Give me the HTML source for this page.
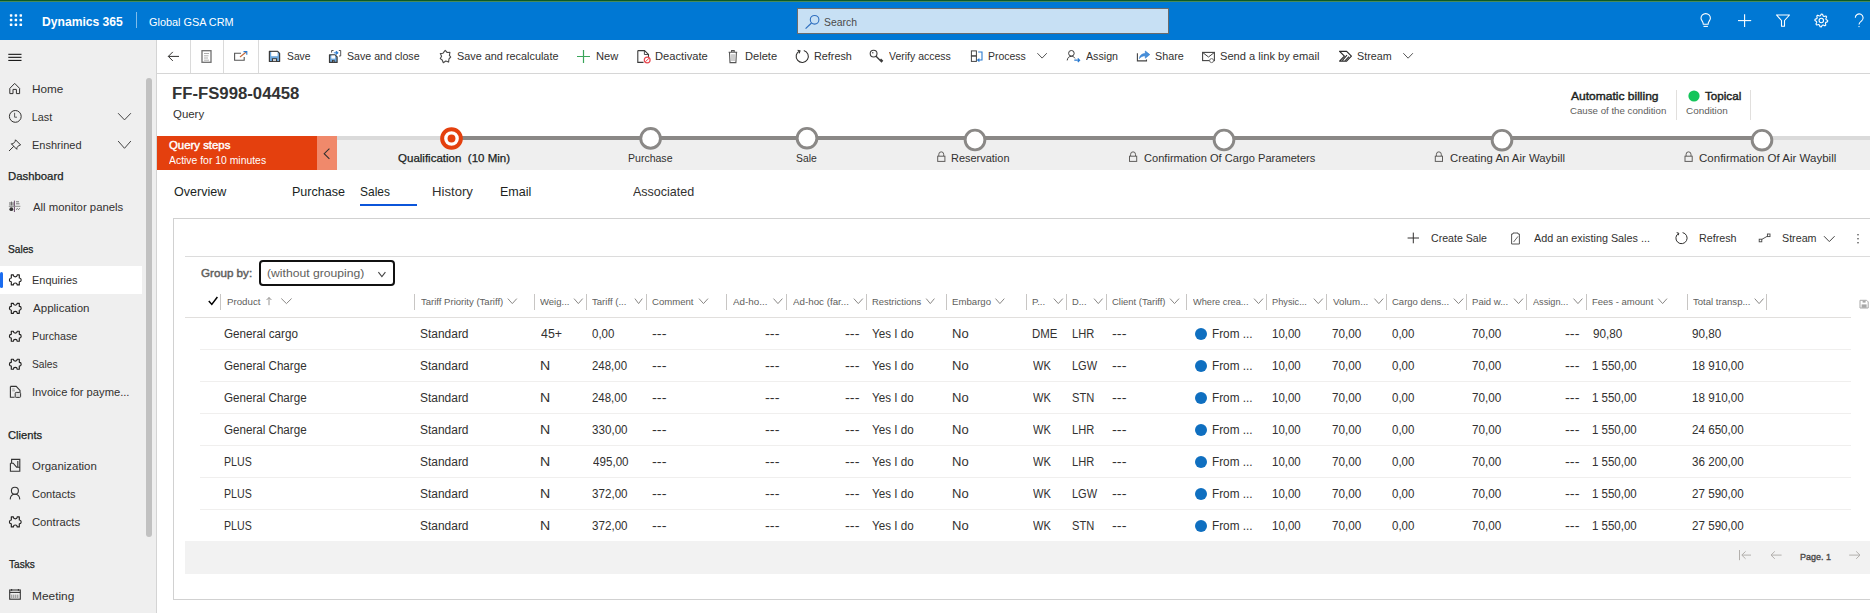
<!DOCTYPE html>
<html><head><meta charset="utf-8">
<style>
*{box-sizing:border-box;margin:0;padding:0}
html,body{width:1870px;height:613px;overflow:hidden;background:#fff;font-family:"Liberation Sans",sans-serif;color:#323130;position:relative}
.a{position:absolute;white-space:pre;transform-origin:0 0}
svg.a{overflow:visible}
</style></head>
<body>
<div class="a" style="left:0px;top:0px;width:1870px;height:40px;background:#0078d4;"></div>
<div class="a" style="left:0px;top:0px;width:1870px;height:1px;background:#0b5a2a;"></div>
<div class="a" style="left:0px;top:1px;width:1870px;height:1px;background:#468a5c;"></div>
<div class="a" style="left:0px;top:40px;width:156px;height:573px;background:#efefef;"></div>
<div class="a" style="left:156px;top:40px;width:1px;height:573px;background:#d4d4d4;"></div>
<div class="a" style="left:146px;top:78px;width:6px;height:459px;background:#c1c1c1;border-radius:3px"></div>
<div class="a" style="left:0px;top:266px;width:142px;height:28px;background:#ffffff;"></div>
<div class="a" style="left:0px;top:272px;width:3px;height:16px;background:#1a6cf0;border-radius:1.5px"></div>
<div class="a" style="left:157px;top:73px;width:1713px;height:1px;background:#d6d6d6;"></div>
<div class="a" style="left:190px;top:40px;width:1px;height:33px;background:#dadada;"></div>
<div class="a" style="left:223px;top:40px;width:1px;height:33px;background:#dadada;"></div>
<div class="a" style="left:258px;top:40px;width:1px;height:33px;background:#dadada;"></div>
<div class="a" style="left:797px;top:8px;width:372px;height:26px;background:#c7e0f4;border:1px solid #6b6b6b"></div>
<div class="a" style="left:136px;top:12px;width:1px;height:16px;background:rgba(255,255,255,0.5);"></div>
<div class="a" style="left:157px;top:136px;width:160px;height:34px;background:#e4400e;"></div>
<div class="a" style="left:317px;top:136px;width:20px;height:34px;background:#f0896b;"></div>
<div class="a" style="left:337px;top:140px;width:1533px;height:30px;background:#efefef;"></div>
<div class="a" style="left:337px;top:136px;width:1533px;height:4px;background:#dadada;"></div>
<div class="a" style="left:451px;top:136px;width:1311px;height:4px;background:#8a8886;"></div>
<div class="a" style="left:360px;top:204px;width:57px;height:2px;background:#0b55da;"></div>
<div class="a" style="left:173px;top:218px;width:1697px;height:1px;background:#d1d1d1;"></div>
<div class="a" style="left:173px;top:218px;width:1px;height:382px;background:#d1d1d1;"></div>
<div class="a" style="left:173px;top:599px;width:1697px;height:1px;background:#d1d1d1;"></div>
<div class="a" style="left:185px;top:256px;width:1685px;height:1px;background:#dcdcdc;"></div>
<div class="a" style="left:185px;top:317px;width:1666px;height:1px;background:#e1dfdd;"></div>
<div class="a" style="left:200px;top:349px;width:1651px;height:1px;background:#f0efee;"></div>
<div class="a" style="left:200px;top:381px;width:1651px;height:1px;background:#f0efee;"></div>
<div class="a" style="left:200px;top:413px;width:1651px;height:1px;background:#f0efee;"></div>
<div class="a" style="left:200px;top:445px;width:1651px;height:1px;background:#f0efee;"></div>
<div class="a" style="left:200px;top:477px;width:1651px;height:1px;background:#f0efee;"></div>
<div class="a" style="left:200px;top:509px;width:1651px;height:1px;background:#f0efee;"></div>
<div class="a" style="left:185px;top:541px;width:1685px;height:33px;background:#f2f2f2;"></div>
<div class="a" style="left:220px;top:294px;width:1px;height:16px;background:#c8c6c4;"></div>
<div class="a" style="left:414px;top:294px;width:1px;height:16px;background:#c8c6c4;"></div>
<div class="a" style="left:534px;top:294px;width:1px;height:16px;background:#c8c6c4;"></div>
<div class="a" style="left:586px;top:294px;width:1px;height:16px;background:#c8c6c4;"></div>
<div class="a" style="left:646px;top:294px;width:1px;height:16px;background:#c8c6c4;"></div>
<div class="a" style="left:726px;top:294px;width:1px;height:16px;background:#c8c6c4;"></div>
<div class="a" style="left:786px;top:294px;width:1px;height:16px;background:#c8c6c4;"></div>
<div class="a" style="left:866px;top:294px;width:1px;height:16px;background:#c8c6c4;"></div>
<div class="a" style="left:946px;top:294px;width:1px;height:16px;background:#c8c6c4;"></div>
<div class="a" style="left:1026px;top:294px;width:1px;height:16px;background:#c8c6c4;"></div>
<div class="a" style="left:1066px;top:294px;width:1px;height:16px;background:#c8c6c4;"></div>
<div class="a" style="left:1106px;top:294px;width:1px;height:16px;background:#c8c6c4;"></div>
<div class="a" style="left:1186px;top:294px;width:1px;height:16px;background:#c8c6c4;"></div>
<div class="a" style="left:1266px;top:294px;width:1px;height:16px;background:#c8c6c4;"></div>
<div class="a" style="left:1326px;top:294px;width:1px;height:16px;background:#c8c6c4;"></div>
<div class="a" style="left:1386px;top:294px;width:1px;height:16px;background:#c8c6c4;"></div>
<div class="a" style="left:1466px;top:294px;width:1px;height:16px;background:#c8c6c4;"></div>
<div class="a" style="left:1526px;top:294px;width:1px;height:16px;background:#c8c6c4;"></div>
<div class="a" style="left:1586px;top:294px;width:1px;height:16px;background:#c8c6c4;"></div>
<div class="a" style="left:1687px;top:294px;width:1px;height:16px;background:#c8c6c4;"></div>
<div class="a" style="left:1766px;top:294px;width:1px;height:16px;background:#c8c6c4;"></div>
<div class="a" style="left:259px;top:260px;width:136px;height:26px;background:#fff;border:2px solid #111;border-radius:4px"></div>
<div class="a" style="left:1676px;top:90px;width:1px;height:30px;background:#e1dfdd;"></div>
<div class="a" style="left:1750px;top:90px;width:1px;height:30px;background:#e1dfdd;"></div>
<div class="a" style="left:1195px;top:327.8px;width:12px;height:12px;background:#0f6fc0;border-radius:50%"></div>
<div class="a" style="left:1195px;top:359.8px;width:12px;height:12px;background:#0f6fc0;border-radius:50%"></div>
<div class="a" style="left:1195px;top:391.8px;width:12px;height:12px;background:#0f6fc0;border-radius:50%"></div>
<div class="a" style="left:1195px;top:423.8px;width:12px;height:12px;background:#0f6fc0;border-radius:50%"></div>
<div class="a" style="left:1195px;top:455.8px;width:12px;height:12px;background:#0f6fc0;border-radius:50%"></div>
<div class="a" style="left:1195px;top:487.8px;width:12px;height:12px;background:#0f6fc0;border-radius:50%"></div>
<div class="a" style="left:1195px;top:519.8px;width:12px;height:12px;background:#0f6fc0;border-radius:50%"></div>
<svg class="a" style="left:0;top:0" width="1870" height="613" viewBox="0 0 1870 613"><rect x="9.85" y="14.15" width="2.5" height="2.5" rx="0.6" fill="#fff"/><rect x="9.85" y="18.85" width="2.5" height="2.5" rx="0.6" fill="#fff"/><rect x="9.85" y="23.55" width="2.5" height="2.5" rx="0.6" fill="#fff"/><rect x="14.65" y="14.15" width="2.5" height="2.5" rx="0.6" fill="#fff"/><rect x="14.65" y="18.85" width="2.5" height="2.5" rx="0.6" fill="#fff"/><rect x="14.65" y="23.55" width="2.5" height="2.5" rx="0.6" fill="#fff"/><rect x="19.55" y="14.15" width="2.5" height="2.5" rx="0.6" fill="#fff"/><rect x="19.55" y="18.85" width="2.5" height="2.5" rx="0.6" fill="#fff"/><rect x="19.55" y="23.55" width="2.5" height="2.5" rx="0.6" fill="#fff"/><circle cx="814.6" cy="19.8" r="4.3" fill="none" stroke="#2f6fbf" stroke-width="1.1"/><line x1="811.5" y1="23" x2="805.6" y2="28.6" stroke="#2f6fbf" stroke-width="1.2"/><path d="M1703.3 24.2 C1703.3 21.5 1701 20.5 1701 18.3 A4.7 4.7 0 0 1 1710.4 18.3 C1710.4 20.5 1708.1 21.5 1708.1 24.2 Z" fill="none" stroke="#fff" stroke-width="1.1"/><line x1="1703.5" y1="26.4" x2="1707.9" y2="26.4" stroke="#fff" stroke-width="1.1"/><line x1="1738" y1="20.6" x2="1751.2" y2="20.6" stroke="#fff" stroke-width="1.1"/><line x1="1744.6" y1="14.2" x2="1744.6" y2="26.9" stroke="#fff" stroke-width="1.1"/><path d="M1776.5 15 L1789.5 15 L1784.5 20.5 L1784.5 26.2 L1781.5 26.2 L1781.5 20.5 Z" fill="none" stroke="#fff" stroke-width="1.1" stroke-linejoin="round"/><path d="M1821.30 14.10 L1822.55 14.22 L1823.18 15.97 L1824.02 16.43 L1825.83 15.97 L1826.62 16.94 L1825.83 18.62 L1826.11 19.54 L1827.70 20.50 L1827.58 21.75 L1825.83 22.38 L1825.37 23.22 L1825.83 25.03 L1824.86 25.82 L1823.18 25.03 L1822.26 25.31 L1821.30 26.90 L1820.05 26.78 L1819.42 25.03 L1818.58 24.57 L1816.77 25.03 L1815.98 24.06 L1816.77 22.38 L1816.49 21.46 L1814.90 20.50 L1815.02 19.25 L1816.77 18.62 L1817.23 17.78 L1816.77 15.97 L1817.74 15.18 L1819.42 15.97 L1820.34 15.69 Z" fill="none" stroke="#fff" stroke-width="1.1" stroke-linejoin="round"/><circle cx="1821.3" cy="20.5" r="2.2" fill="none" stroke="#fff" stroke-width="1.1"/><path d="M1855.3 17.8 A3.9 3.9 0 1 1 1861.7 20.8 C1859.8 22.2 1859 22.6 1859 24.6" fill="none" stroke="#fff" stroke-width="1.1"/><circle cx="1859" cy="26.6" r="0.7" fill="#fff"/><path d="M168.3 56.4 H179 M172.8 51.9 L168.3 56.4 L172.8 60.9" fill="none" stroke="#323130" stroke-width="1"/><rect x="202" y="50.7" width="9" height="11.6" fill="#fff" stroke="#707070" stroke-width="1.3"/><path d="M204 53.5 H209 M204 55.8 H208.5 M204 58 H208 M204 60.2 H209" stroke="#9a9a9a" stroke-width="0.8"/><path d="M241 53.2 H234.6 V60.3 H244.2 V57" fill="none" stroke="#555" stroke-width="1.1"/><path d="M240 57 L246.5 51.8" stroke="#c86b3a" stroke-width="1.1"/><path d="M243.5 51.6 H246.8 V54.8" fill="none" stroke="#2a7ad0" stroke-width="1.1"/><path d="M269.4 51.3 H277.59999999999997 L279.59999999999997 53.3 V61.5 H269.4 Z" fill="#6fa8dc" stroke="#3b3b3b" stroke-width="1.2" stroke-linejoin="round"/><rect x="271.2" y="51.9" width="6.3999999999999995" height="4.284" fill="#fff"/><rect x="271.9" y="58.236" width="5.199999999999999" height="3.264" fill="#3b3b3b"/><rect x="273.0" y="59.052" width="2.999999999999999" height="2.04" fill="#cfcfcf"/><path d="M329.5 54.8 H335.1 L337.1 56.8 V62.4 H329.5 Z" fill="#6fa8dc" stroke="#3b3b3b" stroke-width="1.2" stroke-linejoin="round"/><rect x="331.3" y="55.4" width="3.8" height="3.1919999999999997" fill="#fff"/><rect x="332.0" y="59.967999999999996" width="2.5999999999999996" height="2.432" fill="#3b3b3b"/><rect x="333.1" y="60.57599999999999" width="0.39999999999999947" height="1.52" fill="#cfcfcf"/><path d="M331.6 52.6 V50.5 H333.5 M338.8 50.5 H340.7 V56 H339" fill="none" stroke="#444" stroke-width="0.9"/><path d="M333.8 52.8 H337.5 M336.2 51.2 L338.2 52.8 L336.2 54.4 Z" stroke="#2a7ad0" fill="#2a7ad0" stroke-width="0.9"/><path d="M445.2 50.4 L447.2 52.5 L449.9 52.3 L449.4 55.3 L450.7 57 L449 58.8 L448.6 62.1 L445.8 61 L443.3 62.7 L442.2 60 L440.3 58.6 L441.6 56.3 L440.3 53.6 L443 53.2 Z" fill="none" stroke="#4a4a4a" stroke-width="1.1" stroke-linejoin="round"/><path d="M577 56.5 H590 M583.5 50.1 V62.9" stroke="#3aa55a" stroke-width="1.2"/><path d="M637.8 50.6 H644.5 L648.5 54.4 V57.4 M637.8 50.6 V62.4 H643.5" fill="none" stroke="#3b3b3b" stroke-width="1.1"/><path d="M644.4 50.8 V54.5 H648.3" fill="none" stroke="#3b3b3b" stroke-width="0.9"/><circle cx="647.2" cy="60" r="2.9" fill="#fff" stroke="#e8474f" stroke-width="1.2"/><line x1="645.3" y1="61.8" x2="649.1" y2="58.2" stroke="#e8474f" stroke-width="1"/><path d="M728.6 52.3 H737.2 M731.6 52.2 V50.6 H734.2 V52.2 M729.5 52.5 L730 62.6 H735.9 L736.4 52.5" fill="none" stroke="#555" stroke-width="1.1"/><path d="M731.8 54.2 V61 M733 54.2 V61 M734.2 54.2 V61" stroke="#999" stroke-width="0.7"/><path d="M799.6 50.9 A6.1 6.1 0 1 0 803.8 50.5" fill="none" stroke="#323130" stroke-width="1.1"/><path d="M797.6 50.3 L800 50.9 L799.2 53.3" fill="none" stroke="#323130" stroke-width="1.1"/><circle cx="873.6" cy="53.6" r="3.4" fill="none" stroke="#3b3b3b" stroke-width="1.1"/><circle cx="872.8" cy="52.8" r="0.7" fill="#3b3b3b"/><path d="M875.8 56 L881.5 61.8 L882.4 60.8 L880.6 59" fill="none" stroke="#3b3b3b" stroke-width="1.3"/><rect x="971.4" y="50.9" width="5" height="5" fill="none" stroke="#444" stroke-width="1"/><rect x="971.4" y="56" width="5" height="5.4" fill="none" stroke="#444" stroke-width="1"/><path d="M978.2 52 H982 V60 H977.8 M979.4 58.6 L977.6 60 L979.4 61.5" fill="none" stroke="#2a7ad0" stroke-width="1.1"/><path d="M1037.4 53.2 L1042.1 58.1 L1046.8 53.2" fill="none" stroke="#555" stroke-width="1"/><path d="M1403.3 53.2 L1408.1 58.2 L1412.9 53.2" fill="none" stroke="#555" stroke-width="1"/><circle cx="1071.4" cy="53.3" r="2.8" fill="none" stroke="#3b3b3b" stroke-width="1"/><path d="M1067.2 60.4 C1067.6 57.6 1069 56.3 1071.4 56.3 C1073.3 56.3 1074.4 57.3 1075 58.3" fill="none" stroke="#3b3b3b" stroke-width="1"/><path d="M1074.3 60.2 H1079.4 M1077.8 58.4 L1079.6 60.2 L1077.8 62" fill="none" stroke="#2a7ad0" stroke-width="1.2"/><path d="M1137.4 53.3 V60.9 H1146.5 V59.6" fill="none" stroke="#444" stroke-width="1.1"/><path d="M1139.4 58.6 C1139.8 55.2 1142 53.6 1145.3 53.6 V51 L1149.8 54.6 L1145.3 58.2 V55.8 C1142.8 55.8 1140.8 56.6 1139.4 58.6 Z" fill="#4a90d9" stroke="#2a7ad0" stroke-width="0.6"/><rect x="1202.6" y="52.4" width="11.8" height="8.2" fill="none" stroke="#444" stroke-width="1.1"/><path d="M1202.8 52.6 L1208.5 57 L1214.2 52.6" fill="none" stroke="#444" stroke-width="1"/><circle cx="1211.6" cy="60.6" r="2" fill="#fff" stroke="#666" stroke-width="0.9"/><path d="M1339.6 51.3 H1346.6 L1351.4 56.2 L1346.6 61.1 H1339.6 L1344.4 56.2 Z" fill="none" stroke="#2b2b2b" stroke-width="1.2" stroke-linejoin="round"/><path d="M1342.2 60.6 L1347 55.2 M1345.2 60.6 L1349 56.6" stroke="#2b2b2b" stroke-width="1.1"/><circle cx="1694" cy="96" r="5.6" fill="#13c55a"/><path d="M329.4 148.6 L324.2 153.7 L329.4 158.8" fill="none" stroke="#323130" stroke-width="1.1"/><circle cx="451.5" cy="138.5" r="9.35" fill="#fff" stroke="#e4400e" stroke-width="4"/><circle cx="451.5" cy="138.5" r="3.95" fill="#e4400e"/><circle cx="650.6" cy="138.4" r="9.85" fill="#fff" stroke="#8a8886" stroke-width="2.9"/><circle cx="807" cy="138.2" r="9.85" fill="#fff" stroke="#8a8886" stroke-width="2.9"/><circle cx="975" cy="140" r="9.85" fill="#fff" stroke="#8a8886" stroke-width="2.9"/><circle cx="1224" cy="140" r="9.85" fill="#fff" stroke="#8a8886" stroke-width="2.9"/><circle cx="1502" cy="140.2" r="9.85" fill="#fff" stroke="#8a8886" stroke-width="2.9"/><circle cx="1762" cy="140.2" r="9.85" fill="#fff" stroke="#8a8886" stroke-width="2.9"/><path d="M938.8000000000001 156.0 V154.3 A2.45 2.45 0 0 1 943.7 154.3 V156.0" fill="none" stroke="#605e5c" stroke-width="1"/><rect x="937.7" y="156.20000000000002" width="7.2" height="5.2" fill="none" stroke="#605e5c" stroke-width="1"/><path d="M1130.6 156.0 V154.3 A2.45 2.45 0 0 1 1135.5 154.3 V156.0" fill="none" stroke="#605e5c" stroke-width="1"/><rect x="1129.5" y="156.20000000000002" width="7.2" height="5.2" fill="none" stroke="#605e5c" stroke-width="1"/><path d="M1436.3999999999999 156.0 V154.3 A2.45 2.45 0 0 1 1441.3 154.3 V156.0" fill="none" stroke="#605e5c" stroke-width="1"/><rect x="1435.3" y="156.20000000000002" width="7.2" height="5.2" fill="none" stroke="#605e5c" stroke-width="1"/><path d="M1686.1 156.0 V154.3 A2.45 2.45 0 0 1 1691.0 154.3 V156.0" fill="none" stroke="#605e5c" stroke-width="1"/><rect x="1685.0" y="156.20000000000002" width="7.2" height="5.2" fill="none" stroke="#605e5c" stroke-width="1"/><path d="M1407.6 238 H1419 M1413.3 232.6 V243.3" stroke="#323130" stroke-width="1"/><path d="M1511.6 234 H1513 V233 H1518 V234 H1519.4 V244 H1511.6 Z" fill="none" stroke="#555" stroke-width="1"/><path d="M1513.6 242 L1518 236.4" stroke="#555" stroke-width="0.9"/><path d="M1678.6 233.3 A5.6 5.6 0 1 0 1682.6 232.6" fill="none" stroke="#323130" stroke-width="1"/><path d="M1676.7 232.6 L1678.8 233.3 L1678.2 235.3" fill="none" stroke="#323130" stroke-width="1"/><rect x="1759.2" y="239.2" width="2.6" height="2.6" fill="none" stroke="#444" stroke-width="0.9"/><rect x="1767.4" y="234" width="2.6" height="2.6" fill="none" stroke="#444" stroke-width="0.9"/><path d="M1761.8 239.4 L1767.4 236.2" stroke="#444" stroke-width="0.9"/><path d="M1824 236.2 L1829.3 241.6 L1834.6 236.2" fill="none" stroke="#444" stroke-width="1"/><circle cx="1858" cy="234.8" r="0.8" fill="#444"/><circle cx="1858" cy="238.8" r="0.8" fill="#444"/><circle cx="1858" cy="242.8" r="0.8" fill="#444"/><path d="M378.4 272.2 L381.9 276.6 L385.4 272.2" fill="none" stroke="#444" stroke-width="1.1"/><path d="M208.8 301 L211.8 304.4 L217.4 297" fill="none" stroke="#000" stroke-width="1.5"/><path d="M269 305.2 V297.6 M266.6 300 L269 297.5 L271.4 300" fill="none" stroke="#8a8886" stroke-width="0.9"/><path d="M281.3 298.5 L286.45000000000005 303.6 L291.6 298.5" fill="none" stroke="#8a8886" stroke-width="1"/><path d="M507.8 298.6 L512.3 303.6 L516.8 298.6" fill="none" stroke="#8a8886" stroke-width="1"/><path d="M574 298.6 L578.35 303.6 L582.7 298.6" fill="none" stroke="#8a8886" stroke-width="1"/><path d="M634.9 298.6 L638.5999999999999 303.6 L642.3 298.6" fill="none" stroke="#8a8886" stroke-width="1"/><path d="M699 298.6 L703.5 303.6 L708 298.6" fill="none" stroke="#8a8886" stroke-width="1"/><path d="M773.5 298.6 L777.95 303.6 L782.4 298.6" fill="none" stroke="#8a8886" stroke-width="1"/><path d="M853.8 298.6 L858.3 303.6 L862.8 298.6" fill="none" stroke="#8a8886" stroke-width="1"/><path d="M926.2 298.6 L930.3 303.6 L934.4 298.6" fill="none" stroke="#8a8886" stroke-width="1"/><path d="M995.5 298.6 L999.9 303.6 L1004.3 298.6" fill="none" stroke="#8a8886" stroke-width="1"/><path d="M1053.8 298.6 L1058.3 303.6 L1062.8 298.6" fill="none" stroke="#8a8886" stroke-width="1"/><path d="M1094 298.6 L1098.3 303.6 L1102.6 298.6" fill="none" stroke="#8a8886" stroke-width="1"/><path d="M1170 298.6 L1174.5 303.6 L1179 298.6" fill="none" stroke="#8a8886" stroke-width="1"/><path d="M1254 298.6 L1258.5 303.6 L1263 298.6" fill="none" stroke="#8a8886" stroke-width="1"/><path d="M1313.8 298.6 L1318.3 303.6 L1322.8 298.6" fill="none" stroke="#8a8886" stroke-width="1"/><path d="M1374.4 298.6 L1378.8000000000002 303.6 L1383.2 298.6" fill="none" stroke="#8a8886" stroke-width="1"/><path d="M1453.8 298.6 L1458.5 303.6 L1463.2 298.6" fill="none" stroke="#8a8886" stroke-width="1"/><path d="M1514 298.6 L1518.5 303.6 L1523 298.6" fill="none" stroke="#8a8886" stroke-width="1"/><path d="M1573.5 298.6 L1577.95 303.6 L1582.4 298.6" fill="none" stroke="#8a8886" stroke-width="1"/><path d="M1658.2 298.6 L1662.6 303.6 L1667 298.6" fill="none" stroke="#8a8886" stroke-width="1"/><path d="M1754.7 298.6 L1759.1 303.6 L1763.5 298.6" fill="none" stroke="#8a8886" stroke-width="1"/><path d="M1860 300.3 H1866.6 L1868.2 301.9 V308 H1860 Z" fill="none" stroke="#a8a8a8" stroke-width="1"/><rect x="1861.6" y="304.4" width="5" height="3.4" fill="#a8a8a8"/><rect x="1862.6" y="300.6" width="3" height="2" fill="#a8a8a8"/><path d="M1739.5 550 V560.2 M1751 555.1 H1742 M1745.6 551.4 L1741.8 555.1 L1745.6 558.8" fill="none" stroke="#b3b0ad" stroke-width="1"/><path d="M1781.6 555.1 H1771 M1774.8 551.4 L1771 555.1 L1774.8 558.8" fill="none" stroke="#b3b0ad" stroke-width="1"/><path d="M1849.2 555.1 H1860 M1856.2 551.4 L1860 555.1 L1856.2 558.8" fill="none" stroke="#b3b0ad" stroke-width="1"/><path d="M8.3 54.3 H21.5 M8.3 57.3 H21.5 M8.3 60.4 H21.5" stroke="#000" stroke-width="1"/><path d="M9.8 88.4 L14.7 83.4 L19.6 88.4 V93.6 H16.4 V89.4 H13 V93.6 H9.8 Z" fill="none" stroke="#323130" stroke-width="1" stroke-linejoin="round"/><circle cx="15.3" cy="116.4" r="5.9" fill="none" stroke="#323130" stroke-width="1"/><path d="M14.6 112.8 V117.2 H17" fill="none" stroke="#5a5a5a" stroke-width="1"/><path d="M118.1 113.2 L124.5 119.9 L130.9 113.2" fill="none" stroke="#444" stroke-width="1"/><path d="M118.1 141 L124.5 148.3 L130.9 141" fill="none" stroke="#444" stroke-width="1"/><path d="M15.5 139.8 L20.6 144.9 L19 145.5 L16.8 147.6 L16.8 149.3 L11.3 143.8 L13 143.8 L15 141.6 Z M13.8 146.3 L9 151" fill="none" stroke="#323130" stroke-width="1" stroke-linejoin="round"/><path d="M14.4 200.6 V212" stroke="#6a4a6a" stroke-width="1"/><path d="M8.8 206.3 H20.4" stroke="#8a8a8a" stroke-width="1"/><path d="M10 202 V205.5 M11.5 201.6 V205.5 M13 202.2 V205.5" stroke="#5a5a5a" stroke-width="0.9"/><path d="M16 201.8 H19 M16 203.8 H19.5" stroke="#6a6a6a" stroke-width="0.9"/><circle cx="11.3" cy="209.2" r="1.9" fill="#333"/><path d="M16 209.6 L17.4 208.6 L18.6 209.6 L19.8 208.2" fill="none" stroke="#6a6a6a" stroke-width="0.9"/><path d="M11.3 274.90000000000003 H13.4 A1.9 1.9 0 0 0 17.200000000000003 274.90000000000003 H19.3 V278.00000000000006 A1.9 1.9 0 0 1 19.3 281.8 V284.90000000000003 H17.200000000000003 A1.9 1.9 0 0 0 13.4 284.90000000000003 H11.3 V281.8 A1.9 1.9 0 0 1 11.3 278.00000000000006 Z" fill="none" stroke="#201f1e" stroke-width="1.15" stroke-linejoin="round"/><path d="M11.3 303.3 H13.4 A1.9 1.9 0 0 0 17.200000000000003 303.3 H19.3 V306.40000000000003 A1.9 1.9 0 0 1 19.3 310.2 V313.3 H17.200000000000003 A1.9 1.9 0 0 0 13.4 313.3 H11.3 V310.2 A1.9 1.9 0 0 1 11.3 306.40000000000003 Z" fill="none" stroke="#201f1e" stroke-width="1.15" stroke-linejoin="round"/><path d="M11.3 331.20000000000005 H13.4 A1.9 1.9 0 0 0 17.200000000000003 331.20000000000005 H19.3 V334.30000000000007 A1.9 1.9 0 0 1 19.3 338.1 V341.20000000000005 H17.200000000000003 A1.9 1.9 0 0 0 13.4 341.20000000000005 H11.3 V338.1 A1.9 1.9 0 0 1 11.3 334.30000000000007 Z" fill="none" stroke="#201f1e" stroke-width="1.15" stroke-linejoin="round"/><path d="M11.3 359.20000000000005 H13.4 A1.9 1.9 0 0 0 17.200000000000003 359.20000000000005 H19.3 V362.30000000000007 A1.9 1.9 0 0 1 19.3 366.1 V369.20000000000005 H17.200000000000003 A1.9 1.9 0 0 0 13.4 369.20000000000005 H11.3 V366.1 A1.9 1.9 0 0 1 11.3 362.30000000000007 Z" fill="none" stroke="#201f1e" stroke-width="1.15" stroke-linejoin="round"/><path d="M11.3 516.9 H13.4 A1.9 1.9 0 0 0 17.200000000000003 516.9 H19.3 V520.0 A1.9 1.9 0 0 1 19.3 523.8 V526.9 H17.200000000000003 A1.9 1.9 0 0 0 13.4 526.9 H11.3 V523.8 A1.9 1.9 0 0 1 11.3 520.0 Z" fill="none" stroke="#201f1e" stroke-width="1.15" stroke-linejoin="round"/><path d="M10.4 386.4 H16.2 L20 390.4 V392.6 M10.4 386.4 V397.2 H14.6" fill="none" stroke="#333" stroke-width="1.1"/><path d="M12.2 389 H14.6 M12.2 390.8 H15" stroke="#888" stroke-width="0.8"/><rect x="15.2" y="392.4" width="5.4" height="5" rx="1" fill="#ddd" stroke="#333" stroke-width="1"/><path d="M10.4 463.2 V471.2 H19.8 V459.4 H11.6 V463.2 H10.4 M10.4 463.2 H13.2 L16.6 467.2 H19.8 M17.8 461 V467.2" fill="none" stroke="#333" stroke-width="1.1"/><circle cx="14.9" cy="490.7" r="3.5" fill="none" stroke="#333" stroke-width="1.1"/><path d="M10.2 499.4 C10.4 496 12.2 494.3 14.9 494.3 C17.6 494.3 19.6 496 19.8 499.4" fill="none" stroke="#333" stroke-width="1.1"/><rect x="9.7" y="590" width="10.6" height="9.2" fill="none" stroke="#333" stroke-width="1.1"/><path d="M9.7 592.4 H20.3" stroke="#333" stroke-width="1.1"/><path d="M11.6 589 V590.8 M18.4 589 V590.8" stroke="#333" stroke-width="1.1"/><path d="M11.8 594.6 V598 M13.8 594.6 V598 M15.8 594.6 V598 M17.8 594.6 V598" stroke="#777" stroke-width="0.9"/></svg>
<div class="a" style="left:41.55px;top:15.94px;font-size:12px;line-height:13.40px;font-weight:700;color:#fff;transform:scaleX(1.0096);">Dynamics 365</div>
<div class="a" style="left:148.66px;top:16.19px;font-size:11.5px;line-height:12.85px;font-weight:400;color:#fff;transform:scaleX(0.9457);">Global GSA CRM</div>
<div class="a" style="left:823.78px;top:16.15px;font-size:11px;line-height:12.29px;font-weight:400;color:#4a4a4a;transform:scaleX(0.9449);">Search</div>
<div class="a" style="left:286.78px;top:49.86px;font-size:11.2px;line-height:12.51px;font-weight:400;color:#323130;transform:scaleX(0.9215);">Save</div>
<div class="a" style="left:347.27px;top:49.86px;font-size:11.2px;line-height:12.51px;font-weight:400;color:#323130;transform:scaleX(0.9485);">Save and close</div>
<div class="a" style="left:456.96px;top:49.86px;font-size:11.2px;line-height:12.51px;font-weight:400;color:#323130;transform:scaleX(0.9711);">Save and recalculate</div>
<div class="a" style="left:595.51px;top:49.86px;font-size:11.2px;line-height:12.51px;font-weight:400;color:#323130;transform:scaleX(0.9952);">New</div>
<div class="a" style="left:654.91px;top:49.86px;font-size:11.2px;line-height:12.51px;font-weight:400;color:#323130;transform:scaleX(0.9977);">Deactivate</div>
<div class="a" style="left:744.81px;top:49.86px;font-size:11.2px;line-height:12.51px;font-weight:400;color:#323130;transform:scaleX(0.9928);">Delete</div>
<div class="a" style="left:813.63px;top:49.86px;font-size:11.2px;line-height:12.51px;font-weight:400;color:#323130;transform:scaleX(0.9673);">Refresh</div>
<div class="a" style="left:888.89px;top:49.86px;font-size:11.2px;line-height:12.51px;font-weight:400;color:#323130;transform:scaleX(0.9387);">Verify access</div>
<div class="a" style="left:987.66px;top:49.86px;font-size:11.2px;line-height:12.51px;font-weight:400;color:#323130;transform:scaleX(0.9362);">Process</div>
<div class="a" style="left:1086.00px;top:49.86px;font-size:11.2px;line-height:12.51px;font-weight:400;color:#323130;transform:scaleX(0.9536);">Assign</div>
<div class="a" style="left:1154.76px;top:49.86px;font-size:11.2px;line-height:12.51px;font-weight:400;color:#323130;transform:scaleX(0.9623);">Share</div>
<div class="a" style="left:1220.24px;top:49.86px;font-size:11.2px;line-height:12.51px;font-weight:400;color:#323130;transform:scaleX(0.9930);">Send a link by email</div>
<div class="a" style="left:1357.06px;top:49.86px;font-size:11.2px;line-height:12.51px;font-weight:400;color:#323130;transform:scaleX(0.9589);">Stream</div>
<div class="a" style="left:172.23px;top:85.12px;font-size:16px;line-height:17.87px;font-weight:700;color:#333;transform:scaleX(1.0453);">FF-FS998-04458</div>
<div class="a" style="left:172.83px;top:108.80px;font-size:10.5px;line-height:11.73px;font-weight:400;color:#323130;transform:scaleX(1.0879);">Query</div>
<div class="a" style="left:1570.70px;top:89.84px;font-size:11px;line-height:12.29px;font-weight:400;color:#201f1e;transform:scaleX(1.0929);-webkit-text-stroke:0.4px #201f1e;">Automatic billing</div>
<div class="a" style="left:1570.22px;top:105.56px;font-size:9px;line-height:10.05px;font-weight:400;color:#605e5c;transform:scaleX(1.0750);">Cause of the condition</div>
<div class="a" style="left:1704.67px;top:89.84px;font-size:11px;line-height:12.29px;font-weight:400;color:#201f1e;transform:scaleX(1.0591);-webkit-text-stroke:0.4px #201f1e;">Topical</div>
<div class="a" style="left:1686.20px;top:105.56px;font-size:9px;line-height:10.05px;font-weight:400;color:#605e5c;transform:scaleX(1.1003);">Condition</div>
<div class="a" style="left:168.73px;top:140.30px;font-size:10.5px;line-height:11.73px;font-weight:400;color:#fff;transform:scaleX(1.0836);-webkit-text-stroke:0.4px #fff;">Query steps</div>
<div class="a" style="left:169.30px;top:154.50px;font-size:10.5px;line-height:11.73px;font-weight:400;color:#fff;transform:scaleX(0.9903);">Active for 10 minutes</div>
<div class="a" style="left:398.22px;top:152.43px;font-size:10.8px;line-height:12.06px;font-weight:400;color:#201f1e;transform:scaleX(1.0676);-webkit-text-stroke:0.25px #201f1e;">Qualification  (10 Min)</div>
<div class="a" style="left:628.26px;top:152.03px;font-size:10.8px;line-height:12.06px;font-weight:400;color:#323130;transform:scaleX(0.9756);">Purchase</div>
<div class="a" style="left:796.48px;top:152.03px;font-size:10.8px;line-height:12.06px;font-weight:400;color:#323130;transform:scaleX(0.9599);">Sale</div>
<div class="a" style="left:951.32px;top:152.03px;font-size:10.8px;line-height:12.06px;font-weight:400;color:#323130;transform:scaleX(1.0151);">Reservation</div>
<div class="a" style="left:1144.25px;top:152.03px;font-size:10.8px;line-height:12.06px;font-weight:400;color:#323130;transform:scaleX(1.0272);">Confirmation Of Cargo Parameters</div>
<div class="a" style="left:1449.73px;top:152.03px;font-size:10.8px;line-height:12.06px;font-weight:400;color:#323130;transform:scaleX(1.0516);">Creating An Air Waybill</div>
<div class="a" style="left:1698.82px;top:152.03px;font-size:10.8px;line-height:12.06px;font-weight:400;color:#323130;transform:scaleX(1.0673);">Confirmation Of Air Waybill</div>
<div class="a" style="left:173.57px;top:184.90px;font-size:12.6px;line-height:14.07px;font-weight:400;color:#201f1e;transform:scaleX(0.9959);">Overview</div>
<div class="a" style="left:291.70px;top:184.90px;font-size:12.6px;line-height:14.07px;font-weight:400;color:#201f1e;transform:scaleX(0.9969);">Purchase</div>
<div class="a" style="left:360.10px;top:184.90px;font-size:12.6px;line-height:14.07px;font-weight:400;color:#201f1e;transform:scaleX(0.9511);">Sales</div>
<div class="a" style="left:432.05px;top:184.90px;font-size:12.6px;line-height:14.07px;font-weight:400;color:#323130;transform:scaleX(1.0451);">History</div>
<div class="a" style="left:499.50px;top:184.90px;font-size:12.6px;line-height:14.07px;font-weight:400;color:#201f1e;transform:scaleX(0.9929);">Email</div>
<div class="a" style="left:632.60px;top:184.90px;font-size:12.6px;line-height:14.07px;font-weight:400;color:#323130;transform:scaleX(0.9941);">Associated</div>
<div class="a" style="left:1431.27px;top:232.19px;font-size:11.5px;line-height:12.85px;font-weight:400;color:#323130;transform:scaleX(0.9215);">Create Sale</div>
<div class="a" style="left:1533.70px;top:232.19px;font-size:11.5px;line-height:12.85px;font-weight:400;color:#323130;transform:scaleX(0.9398);">Add an existing Sales ...</div>
<div class="a" style="left:1699.14px;top:232.19px;font-size:11.5px;line-height:12.85px;font-weight:400;color:#323130;transform:scaleX(0.9317);">Refresh</div>
<div class="a" style="left:1782.16px;top:232.19px;font-size:11.5px;line-height:12.85px;font-weight:400;color:#323130;transform:scaleX(0.9311);">Stream</div>
<div class="a" style="left:201.12px;top:266.89px;font-size:11.5px;line-height:12.85px;font-weight:400;color:#605e5c;transform:scaleX(1.0128);-webkit-text-stroke:0.45px #605e5c;">Group by:</div>
<div class="a" style="left:267.07px;top:266.89px;font-size:11.5px;line-height:12.85px;font-weight:400;color:#605e5c;transform:scaleX(1.0561);">(without grouping)</div>
<div class="a" style="left:226.52px;top:297.19px;font-size:9.4px;line-height:10.50px;font-weight:400;color:#605e5c;transform:scaleX(1.0353);">Product</div>
<div class="a" style="left:420.81px;top:297.19px;font-size:9.4px;line-height:10.50px;font-weight:400;color:#605e5c;transform:scaleX(1.0165);">Tariff Priority (Tariff)</div>
<div class="a" style="left:540.30px;top:297.19px;font-size:9.4px;line-height:10.50px;font-weight:400;color:#605e5c;transform:scaleX(1.0140);">Weig...</div>
<div class="a" style="left:592.31px;top:297.19px;font-size:9.4px;line-height:10.50px;font-weight:400;color:#605e5c;transform:scaleX(1.0210);">Tariff (...</div>
<div class="a" style="left:652.32px;top:297.19px;font-size:9.4px;line-height:10.50px;font-weight:400;color:#605e5c;transform:scaleX(1.0216);">Comment</div>
<div class="a" style="left:732.90px;top:297.19px;font-size:9.4px;line-height:10.50px;font-weight:400;color:#605e5c;transform:scaleX(1.0482);">Ad-ho...</div>
<div class="a" style="left:792.70px;top:297.19px;font-size:9.4px;line-height:10.50px;font-weight:400;color:#605e5c;transform:scaleX(1.0430);">Ad-hoc (far...</div>
<div class="a" style="left:872.05px;top:297.19px;font-size:9.4px;line-height:10.50px;font-weight:400;color:#605e5c;transform:scaleX(1.0035);">Restrictions</div>
<div class="a" style="left:952.13px;top:297.19px;font-size:9.4px;line-height:10.50px;font-weight:400;color:#605e5c;transform:scaleX(1.0260);">Embargo</div>
<div class="a" style="left:1031.93px;top:297.19px;font-size:9.4px;line-height:10.50px;font-weight:400;color:#605e5c;transform:scaleX(1.0284);">P...</div>
<div class="a" style="left:1072.25px;top:297.19px;font-size:9.4px;line-height:10.50px;font-weight:400;color:#605e5c;transform:scaleX(0.9944);">D...</div>
<div class="a" style="left:1112.33px;top:297.19px;font-size:9.4px;line-height:10.50px;font-weight:400;color:#605e5c;transform:scaleX(1.0101);">Client (Tariff)</div>
<div class="a" style="left:1192.81px;top:297.19px;font-size:9.4px;line-height:10.50px;font-weight:400;color:#605e5c;transform:scaleX(0.9863);">Where crea...</div>
<div class="a" style="left:1271.96px;top:297.19px;font-size:9.4px;line-height:10.50px;font-weight:400;color:#605e5c;transform:scaleX(0.9843);">Physic...</div>
<div class="a" style="left:1332.50px;top:297.19px;font-size:9.4px;line-height:10.50px;font-weight:400;color:#605e5c;transform:scaleX(1.0426);">Volum...</div>
<div class="a" style="left:1392.12px;top:297.19px;font-size:9.4px;line-height:10.50px;font-weight:400;color:#605e5c;transform:scaleX(1.0148);">Cargo dens...</div>
<div class="a" style="left:1472.23px;top:297.19px;font-size:9.4px;line-height:10.50px;font-weight:400;color:#605e5c;transform:scaleX(1.0196);">Paid w...</div>
<div class="a" style="left:1532.60px;top:297.19px;font-size:9.4px;line-height:10.50px;font-weight:400;color:#605e5c;transform:scaleX(0.9785);">Assign...</div>
<div class="a" style="left:1591.84px;top:297.19px;font-size:9.4px;line-height:10.50px;font-weight:400;color:#605e5c;transform:scaleX(1.0136);">Fees - amount</div>
<div class="a" style="left:1692.71px;top:297.19px;font-size:9.4px;line-height:10.50px;font-weight:400;color:#605e5c;transform:scaleX(1.0205);">Total transp...</div>
<div class="a" style="left:224.42px;top:327.59px;font-size:12.5px;line-height:13.96px;font-weight:400;color:#323130;transform:scaleX(0.9333);">General cargo</div>
<div class="a" style="left:419.90px;top:327.59px;font-size:12.5px;line-height:13.96px;font-weight:400;color:#323130;transform:scaleX(0.9563);">Standard</div>
<div class="a" style="left:540.55px;top:327.59px;font-size:12.5px;line-height:13.96px;font-weight:400;color:#323130;transform:scaleX(0.9914);">45+</div>
<div class="a" style="left:592.34px;top:327.59px;font-size:12.5px;line-height:13.96px;font-weight:400;color:#323130;transform:scaleX(0.9198);">0,00</div>
<div class="a" style="left:652.32px;top:327.59px;font-size:12.5px;line-height:13.96px;font-weight:400;color:#323130;transform:scaleX(1.1604);">---</div>
<div class="a" style="left:764.72px;top:327.59px;font-size:12.5px;line-height:13.96px;font-weight:400;color:#323130;transform:scaleX(1.1604);">---</div>
<div class="a" style="left:844.62px;top:327.59px;font-size:12.5px;line-height:13.96px;font-weight:400;color:#323130;transform:scaleX(1.1604);">---</div>
<div class="a" style="left:872.25px;top:327.59px;font-size:12.5px;line-height:13.96px;font-weight:400;color:#323130;transform:scaleX(0.9303);">Yes I do</div>
<div class="a" style="left:951.86px;top:327.59px;font-size:12.5px;line-height:13.96px;font-weight:400;color:#323130;transform:scaleX(1.0414);">No</div>
<div class="a" style="left:1031.89px;top:327.59px;font-size:12.5px;line-height:13.96px;font-weight:400;color:#323130;transform:scaleX(0.9143);">DME</div>
<div class="a" style="left:1071.91px;top:327.59px;font-size:12.5px;line-height:13.96px;font-weight:400;color:#323130;transform:scaleX(0.8898);">LHR</div>
<div class="a" style="left:1112.32px;top:327.59px;font-size:12.5px;line-height:13.96px;font-weight:400;color:#323130;transform:scaleX(1.1604);">---</div>
<div class="a" style="left:1211.76px;top:327.59px;font-size:12.5px;line-height:13.96px;font-weight:400;color:#323130;transform:scaleX(0.9419);">From ...</div>
<div class="a" style="left:1272.28px;top:327.59px;font-size:12.5px;line-height:13.96px;font-weight:400;color:#323130;transform:scaleX(0.9176);">10,00</div>
<div class="a" style="left:1332.01px;top:327.59px;font-size:12.5px;line-height:13.96px;font-weight:400;color:#323130;transform:scaleX(0.9361);">70,00</div>
<div class="a" style="left:1392.14px;top:327.59px;font-size:12.5px;line-height:13.96px;font-weight:400;color:#323130;transform:scaleX(0.9198);">0,00</div>
<div class="a" style="left:1472.41px;top:327.59px;font-size:12.5px;line-height:13.96px;font-weight:400;color:#323130;transform:scaleX(0.9361);">70,00</div>
<div class="a" style="left:1564.62px;top:327.59px;font-size:12.5px;line-height:13.96px;font-weight:400;color:#323130;transform:scaleX(1.1604);">---</div>
<div class="a" style="left:1592.61px;top:327.59px;font-size:12.5px;line-height:13.96px;font-weight:400;color:#323130;transform:scaleX(0.9361);">90,80</div>
<div class="a" style="left:1692.31px;top:327.59px;font-size:12.5px;line-height:13.96px;font-weight:400;color:#323130;transform:scaleX(0.9361);">90,80</div>
<div class="a" style="left:224.42px;top:359.59px;font-size:12.5px;line-height:13.96px;font-weight:400;color:#323130;transform:scaleX(0.9288);">General Charge</div>
<div class="a" style="left:419.90px;top:359.59px;font-size:12.5px;line-height:13.96px;font-weight:400;color:#323130;transform:scaleX(0.9563);">Standard</div>
<div class="a" style="left:539.67px;top:359.59px;font-size:12.5px;line-height:13.96px;font-weight:400;color:#323130;transform:scaleX(1.1286);">N</div>
<div class="a" style="left:592.23px;top:359.59px;font-size:12.5px;line-height:13.96px;font-weight:400;color:#323130;transform:scaleX(0.9158);">248,00</div>
<div class="a" style="left:652.32px;top:359.59px;font-size:12.5px;line-height:13.96px;font-weight:400;color:#323130;transform:scaleX(1.1604);">---</div>
<div class="a" style="left:764.72px;top:359.59px;font-size:12.5px;line-height:13.96px;font-weight:400;color:#323130;transform:scaleX(1.1604);">---</div>
<div class="a" style="left:844.62px;top:359.59px;font-size:12.5px;line-height:13.96px;font-weight:400;color:#323130;transform:scaleX(1.1604);">---</div>
<div class="a" style="left:872.25px;top:359.59px;font-size:12.5px;line-height:13.96px;font-weight:400;color:#323130;transform:scaleX(0.9303);">Yes I do</div>
<div class="a" style="left:951.86px;top:359.59px;font-size:12.5px;line-height:13.96px;font-weight:400;color:#323130;transform:scaleX(1.0414);">No</div>
<div class="a" style="left:1032.69px;top:359.59px;font-size:12.5px;line-height:13.96px;font-weight:400;color:#323130;transform:scaleX(0.8906);">WK</div>
<div class="a" style="left:1071.92px;top:359.59px;font-size:12.5px;line-height:13.96px;font-weight:400;color:#323130;transform:scaleX(0.8804);">LGW</div>
<div class="a" style="left:1112.32px;top:359.59px;font-size:12.5px;line-height:13.96px;font-weight:400;color:#323130;transform:scaleX(1.1604);">---</div>
<div class="a" style="left:1211.76px;top:359.59px;font-size:12.5px;line-height:13.96px;font-weight:400;color:#323130;transform:scaleX(0.9419);">From ...</div>
<div class="a" style="left:1272.28px;top:359.59px;font-size:12.5px;line-height:13.96px;font-weight:400;color:#323130;transform:scaleX(0.9176);">10,00</div>
<div class="a" style="left:1332.01px;top:359.59px;font-size:12.5px;line-height:13.96px;font-weight:400;color:#323130;transform:scaleX(0.9361);">70,00</div>
<div class="a" style="left:1392.14px;top:359.59px;font-size:12.5px;line-height:13.96px;font-weight:400;color:#323130;transform:scaleX(0.9198);">0,00</div>
<div class="a" style="left:1472.41px;top:359.59px;font-size:12.5px;line-height:13.96px;font-weight:400;color:#323130;transform:scaleX(0.9361);">70,00</div>
<div class="a" style="left:1564.62px;top:359.59px;font-size:12.5px;line-height:13.96px;font-weight:400;color:#323130;transform:scaleX(1.1604);">---</div>
<div class="a" style="left:1592.28px;top:359.59px;font-size:12.5px;line-height:13.96px;font-weight:400;color:#323130;transform:scaleX(0.9188);">1 550,00</div>
<div class="a" style="left:1691.97px;top:359.59px;font-size:12.5px;line-height:13.96px;font-weight:400;color:#323130;transform:scaleX(0.9312);">18 910,00</div>
<div class="a" style="left:224.42px;top:391.59px;font-size:12.5px;line-height:13.96px;font-weight:400;color:#323130;transform:scaleX(0.9288);">General Charge</div>
<div class="a" style="left:419.90px;top:391.59px;font-size:12.5px;line-height:13.96px;font-weight:400;color:#323130;transform:scaleX(0.9563);">Standard</div>
<div class="a" style="left:539.67px;top:391.59px;font-size:12.5px;line-height:13.96px;font-weight:400;color:#323130;transform:scaleX(1.1286);">N</div>
<div class="a" style="left:592.23px;top:391.59px;font-size:12.5px;line-height:13.96px;font-weight:400;color:#323130;transform:scaleX(0.9158);">248,00</div>
<div class="a" style="left:652.32px;top:391.59px;font-size:12.5px;line-height:13.96px;font-weight:400;color:#323130;transform:scaleX(1.1604);">---</div>
<div class="a" style="left:764.72px;top:391.59px;font-size:12.5px;line-height:13.96px;font-weight:400;color:#323130;transform:scaleX(1.1604);">---</div>
<div class="a" style="left:844.62px;top:391.59px;font-size:12.5px;line-height:13.96px;font-weight:400;color:#323130;transform:scaleX(1.1604);">---</div>
<div class="a" style="left:872.25px;top:391.59px;font-size:12.5px;line-height:13.96px;font-weight:400;color:#323130;transform:scaleX(0.9303);">Yes I do</div>
<div class="a" style="left:951.86px;top:391.59px;font-size:12.5px;line-height:13.96px;font-weight:400;color:#323130;transform:scaleX(1.0414);">No</div>
<div class="a" style="left:1032.69px;top:391.59px;font-size:12.5px;line-height:13.96px;font-weight:400;color:#323130;transform:scaleX(0.8906);">WK</div>
<div class="a" style="left:1072.24px;top:391.59px;font-size:12.5px;line-height:13.96px;font-weight:400;color:#323130;transform:scaleX(0.8898);">STN</div>
<div class="a" style="left:1112.32px;top:391.59px;font-size:12.5px;line-height:13.96px;font-weight:400;color:#323130;transform:scaleX(1.1604);">---</div>
<div class="a" style="left:1211.76px;top:391.59px;font-size:12.5px;line-height:13.96px;font-weight:400;color:#323130;transform:scaleX(0.9419);">From ...</div>
<div class="a" style="left:1272.28px;top:391.59px;font-size:12.5px;line-height:13.96px;font-weight:400;color:#323130;transform:scaleX(0.9176);">10,00</div>
<div class="a" style="left:1332.01px;top:391.59px;font-size:12.5px;line-height:13.96px;font-weight:400;color:#323130;transform:scaleX(0.9361);">70,00</div>
<div class="a" style="left:1392.14px;top:391.59px;font-size:12.5px;line-height:13.96px;font-weight:400;color:#323130;transform:scaleX(0.9198);">0,00</div>
<div class="a" style="left:1472.41px;top:391.59px;font-size:12.5px;line-height:13.96px;font-weight:400;color:#323130;transform:scaleX(0.9361);">70,00</div>
<div class="a" style="left:1564.62px;top:391.59px;font-size:12.5px;line-height:13.96px;font-weight:400;color:#323130;transform:scaleX(1.1604);">---</div>
<div class="a" style="left:1592.28px;top:391.59px;font-size:12.5px;line-height:13.96px;font-weight:400;color:#323130;transform:scaleX(0.9188);">1 550,00</div>
<div class="a" style="left:1691.97px;top:391.59px;font-size:12.5px;line-height:13.96px;font-weight:400;color:#323130;transform:scaleX(0.9312);">18 910,00</div>
<div class="a" style="left:224.42px;top:423.59px;font-size:12.5px;line-height:13.96px;font-weight:400;color:#323130;transform:scaleX(0.9288);">General Charge</div>
<div class="a" style="left:419.90px;top:423.59px;font-size:12.5px;line-height:13.96px;font-weight:400;color:#323130;transform:scaleX(0.9563);">Standard</div>
<div class="a" style="left:539.67px;top:423.59px;font-size:12.5px;line-height:13.96px;font-weight:400;color:#323130;transform:scaleX(1.1286);">N</div>
<div class="a" style="left:592.33px;top:423.59px;font-size:12.5px;line-height:13.96px;font-weight:400;color:#323130;transform:scaleX(0.9300);">330,00</div>
<div class="a" style="left:652.32px;top:423.59px;font-size:12.5px;line-height:13.96px;font-weight:400;color:#323130;transform:scaleX(1.1604);">---</div>
<div class="a" style="left:764.72px;top:423.59px;font-size:12.5px;line-height:13.96px;font-weight:400;color:#323130;transform:scaleX(1.1604);">---</div>
<div class="a" style="left:844.62px;top:423.59px;font-size:12.5px;line-height:13.96px;font-weight:400;color:#323130;transform:scaleX(1.1604);">---</div>
<div class="a" style="left:872.25px;top:423.59px;font-size:12.5px;line-height:13.96px;font-weight:400;color:#323130;transform:scaleX(0.9303);">Yes I do</div>
<div class="a" style="left:951.86px;top:423.59px;font-size:12.5px;line-height:13.96px;font-weight:400;color:#323130;transform:scaleX(1.0414);">No</div>
<div class="a" style="left:1032.69px;top:423.59px;font-size:12.5px;line-height:13.96px;font-weight:400;color:#323130;transform:scaleX(0.8906);">WK</div>
<div class="a" style="left:1071.91px;top:423.59px;font-size:12.5px;line-height:13.96px;font-weight:400;color:#323130;transform:scaleX(0.8898);">LHR</div>
<div class="a" style="left:1112.32px;top:423.59px;font-size:12.5px;line-height:13.96px;font-weight:400;color:#323130;transform:scaleX(1.1604);">---</div>
<div class="a" style="left:1211.76px;top:423.59px;font-size:12.5px;line-height:13.96px;font-weight:400;color:#323130;transform:scaleX(0.9419);">From ...</div>
<div class="a" style="left:1272.28px;top:423.59px;font-size:12.5px;line-height:13.96px;font-weight:400;color:#323130;transform:scaleX(0.9176);">10,00</div>
<div class="a" style="left:1332.01px;top:423.59px;font-size:12.5px;line-height:13.96px;font-weight:400;color:#323130;transform:scaleX(0.9361);">70,00</div>
<div class="a" style="left:1392.14px;top:423.59px;font-size:12.5px;line-height:13.96px;font-weight:400;color:#323130;transform:scaleX(0.9198);">0,00</div>
<div class="a" style="left:1472.41px;top:423.59px;font-size:12.5px;line-height:13.96px;font-weight:400;color:#323130;transform:scaleX(0.9361);">70,00</div>
<div class="a" style="left:1564.62px;top:423.59px;font-size:12.5px;line-height:13.96px;font-weight:400;color:#323130;transform:scaleX(1.1604);">---</div>
<div class="a" style="left:1592.28px;top:423.59px;font-size:12.5px;line-height:13.96px;font-weight:400;color:#323130;transform:scaleX(0.9188);">1 550,00</div>
<div class="a" style="left:1692.32px;top:423.59px;font-size:12.5px;line-height:13.96px;font-weight:400;color:#323130;transform:scaleX(0.9300);">24 650,00</div>
<div class="a" style="left:224.15px;top:455.59px;font-size:12.5px;line-height:13.96px;font-weight:400;color:#323130;transform:scaleX(0.8482);">PLUS</div>
<div class="a" style="left:419.90px;top:455.59px;font-size:12.5px;line-height:13.96px;font-weight:400;color:#323130;transform:scaleX(0.9563);">Standard</div>
<div class="a" style="left:539.67px;top:455.59px;font-size:12.5px;line-height:13.96px;font-weight:400;color:#323130;transform:scaleX(1.1286);">N</div>
<div class="a" style="left:592.57px;top:455.59px;font-size:12.5px;line-height:13.96px;font-weight:400;color:#323130;transform:scaleX(0.9300);">495,00</div>
<div class="a" style="left:652.32px;top:455.59px;font-size:12.5px;line-height:13.96px;font-weight:400;color:#323130;transform:scaleX(1.1604);">---</div>
<div class="a" style="left:764.72px;top:455.59px;font-size:12.5px;line-height:13.96px;font-weight:400;color:#323130;transform:scaleX(1.1604);">---</div>
<div class="a" style="left:844.62px;top:455.59px;font-size:12.5px;line-height:13.96px;font-weight:400;color:#323130;transform:scaleX(1.1604);">---</div>
<div class="a" style="left:872.25px;top:455.59px;font-size:12.5px;line-height:13.96px;font-weight:400;color:#323130;transform:scaleX(0.9303);">Yes I do</div>
<div class="a" style="left:951.86px;top:455.59px;font-size:12.5px;line-height:13.96px;font-weight:400;color:#323130;transform:scaleX(1.0414);">No</div>
<div class="a" style="left:1032.69px;top:455.59px;font-size:12.5px;line-height:13.96px;font-weight:400;color:#323130;transform:scaleX(0.8906);">WK</div>
<div class="a" style="left:1071.91px;top:455.59px;font-size:12.5px;line-height:13.96px;font-weight:400;color:#323130;transform:scaleX(0.8898);">LHR</div>
<div class="a" style="left:1112.32px;top:455.59px;font-size:12.5px;line-height:13.96px;font-weight:400;color:#323130;transform:scaleX(1.1604);">---</div>
<div class="a" style="left:1211.76px;top:455.59px;font-size:12.5px;line-height:13.96px;font-weight:400;color:#323130;transform:scaleX(0.9419);">From ...</div>
<div class="a" style="left:1272.28px;top:455.59px;font-size:12.5px;line-height:13.96px;font-weight:400;color:#323130;transform:scaleX(0.9176);">10,00</div>
<div class="a" style="left:1332.01px;top:455.59px;font-size:12.5px;line-height:13.96px;font-weight:400;color:#323130;transform:scaleX(0.9361);">70,00</div>
<div class="a" style="left:1392.14px;top:455.59px;font-size:12.5px;line-height:13.96px;font-weight:400;color:#323130;transform:scaleX(0.9198);">0,00</div>
<div class="a" style="left:1472.41px;top:455.59px;font-size:12.5px;line-height:13.96px;font-weight:400;color:#323130;transform:scaleX(0.9361);">70,00</div>
<div class="a" style="left:1564.62px;top:455.59px;font-size:12.5px;line-height:13.96px;font-weight:400;color:#323130;transform:scaleX(1.1604);">---</div>
<div class="a" style="left:1592.28px;top:455.59px;font-size:12.5px;line-height:13.96px;font-weight:400;color:#323130;transform:scaleX(0.9188);">1 550,00</div>
<div class="a" style="left:1692.44px;top:455.59px;font-size:12.5px;line-height:13.96px;font-weight:400;color:#323130;transform:scaleX(0.9300);">36 200,00</div>
<div class="a" style="left:224.15px;top:487.59px;font-size:12.5px;line-height:13.96px;font-weight:400;color:#323130;transform:scaleX(0.8482);">PLUS</div>
<div class="a" style="left:419.90px;top:487.59px;font-size:12.5px;line-height:13.96px;font-weight:400;color:#323130;transform:scaleX(0.9563);">Standard</div>
<div class="a" style="left:539.67px;top:487.59px;font-size:12.5px;line-height:13.96px;font-weight:400;color:#323130;transform:scaleX(1.1286);">N</div>
<div class="a" style="left:592.33px;top:487.59px;font-size:12.5px;line-height:13.96px;font-weight:400;color:#323130;transform:scaleX(0.9300);">372,00</div>
<div class="a" style="left:652.32px;top:487.59px;font-size:12.5px;line-height:13.96px;font-weight:400;color:#323130;transform:scaleX(1.1604);">---</div>
<div class="a" style="left:764.72px;top:487.59px;font-size:12.5px;line-height:13.96px;font-weight:400;color:#323130;transform:scaleX(1.1604);">---</div>
<div class="a" style="left:844.62px;top:487.59px;font-size:12.5px;line-height:13.96px;font-weight:400;color:#323130;transform:scaleX(1.1604);">---</div>
<div class="a" style="left:872.25px;top:487.59px;font-size:12.5px;line-height:13.96px;font-weight:400;color:#323130;transform:scaleX(0.9303);">Yes I do</div>
<div class="a" style="left:951.86px;top:487.59px;font-size:12.5px;line-height:13.96px;font-weight:400;color:#323130;transform:scaleX(1.0414);">No</div>
<div class="a" style="left:1032.69px;top:487.59px;font-size:12.5px;line-height:13.96px;font-weight:400;color:#323130;transform:scaleX(0.8906);">WK</div>
<div class="a" style="left:1071.92px;top:487.59px;font-size:12.5px;line-height:13.96px;font-weight:400;color:#323130;transform:scaleX(0.8804);">LGW</div>
<div class="a" style="left:1112.32px;top:487.59px;font-size:12.5px;line-height:13.96px;font-weight:400;color:#323130;transform:scaleX(1.1604);">---</div>
<div class="a" style="left:1211.76px;top:487.59px;font-size:12.5px;line-height:13.96px;font-weight:400;color:#323130;transform:scaleX(0.9419);">From ...</div>
<div class="a" style="left:1272.28px;top:487.59px;font-size:12.5px;line-height:13.96px;font-weight:400;color:#323130;transform:scaleX(0.9176);">10,00</div>
<div class="a" style="left:1332.01px;top:487.59px;font-size:12.5px;line-height:13.96px;font-weight:400;color:#323130;transform:scaleX(0.9361);">70,00</div>
<div class="a" style="left:1392.14px;top:487.59px;font-size:12.5px;line-height:13.96px;font-weight:400;color:#323130;transform:scaleX(0.9198);">0,00</div>
<div class="a" style="left:1472.41px;top:487.59px;font-size:12.5px;line-height:13.96px;font-weight:400;color:#323130;transform:scaleX(0.9361);">70,00</div>
<div class="a" style="left:1564.62px;top:487.59px;font-size:12.5px;line-height:13.96px;font-weight:400;color:#323130;transform:scaleX(1.1604);">---</div>
<div class="a" style="left:1592.28px;top:487.59px;font-size:12.5px;line-height:13.96px;font-weight:400;color:#323130;transform:scaleX(0.9188);">1 550,00</div>
<div class="a" style="left:1692.32px;top:487.59px;font-size:12.5px;line-height:13.96px;font-weight:400;color:#323130;transform:scaleX(0.9300);">27 590,00</div>
<div class="a" style="left:224.15px;top:519.59px;font-size:12.5px;line-height:13.96px;font-weight:400;color:#323130;transform:scaleX(0.8482);">PLUS</div>
<div class="a" style="left:419.90px;top:519.59px;font-size:12.5px;line-height:13.96px;font-weight:400;color:#323130;transform:scaleX(0.9563);">Standard</div>
<div class="a" style="left:539.67px;top:519.59px;font-size:12.5px;line-height:13.96px;font-weight:400;color:#323130;transform:scaleX(1.1286);">N</div>
<div class="a" style="left:592.33px;top:519.59px;font-size:12.5px;line-height:13.96px;font-weight:400;color:#323130;transform:scaleX(0.9300);">372,00</div>
<div class="a" style="left:652.32px;top:519.59px;font-size:12.5px;line-height:13.96px;font-weight:400;color:#323130;transform:scaleX(1.1604);">---</div>
<div class="a" style="left:764.72px;top:519.59px;font-size:12.5px;line-height:13.96px;font-weight:400;color:#323130;transform:scaleX(1.1604);">---</div>
<div class="a" style="left:844.62px;top:519.59px;font-size:12.5px;line-height:13.96px;font-weight:400;color:#323130;transform:scaleX(1.1604);">---</div>
<div class="a" style="left:872.25px;top:519.59px;font-size:12.5px;line-height:13.96px;font-weight:400;color:#323130;transform:scaleX(0.9303);">Yes I do</div>
<div class="a" style="left:951.86px;top:519.59px;font-size:12.5px;line-height:13.96px;font-weight:400;color:#323130;transform:scaleX(1.0414);">No</div>
<div class="a" style="left:1032.69px;top:519.59px;font-size:12.5px;line-height:13.96px;font-weight:400;color:#323130;transform:scaleX(0.8906);">WK</div>
<div class="a" style="left:1072.24px;top:519.59px;font-size:12.5px;line-height:13.96px;font-weight:400;color:#323130;transform:scaleX(0.8898);">STN</div>
<div class="a" style="left:1112.32px;top:519.59px;font-size:12.5px;line-height:13.96px;font-weight:400;color:#323130;transform:scaleX(1.1604);">---</div>
<div class="a" style="left:1211.76px;top:519.59px;font-size:12.5px;line-height:13.96px;font-weight:400;color:#323130;transform:scaleX(0.9419);">From ...</div>
<div class="a" style="left:1272.28px;top:519.59px;font-size:12.5px;line-height:13.96px;font-weight:400;color:#323130;transform:scaleX(0.9176);">10,00</div>
<div class="a" style="left:1332.01px;top:519.59px;font-size:12.5px;line-height:13.96px;font-weight:400;color:#323130;transform:scaleX(0.9361);">70,00</div>
<div class="a" style="left:1392.14px;top:519.59px;font-size:12.5px;line-height:13.96px;font-weight:400;color:#323130;transform:scaleX(0.9198);">0,00</div>
<div class="a" style="left:1472.41px;top:519.59px;font-size:12.5px;line-height:13.96px;font-weight:400;color:#323130;transform:scaleX(0.9361);">70,00</div>
<div class="a" style="left:1564.62px;top:519.59px;font-size:12.5px;line-height:13.96px;font-weight:400;color:#323130;transform:scaleX(1.1604);">---</div>
<div class="a" style="left:1592.28px;top:519.59px;font-size:12.5px;line-height:13.96px;font-weight:400;color:#323130;transform:scaleX(0.9188);">1 550,00</div>
<div class="a" style="left:1692.32px;top:519.59px;font-size:12.5px;line-height:13.96px;font-weight:400;color:#323130;transform:scaleX(0.9300);">27 590,00</div>
<div class="a" style="left:1800.28px;top:551.90px;font-size:9.5px;line-height:10.61px;font-weight:400;color:#4a4847;transform:scaleX(0.9448);-webkit-text-stroke:0.35px #4a4847;">Page. 1</div>
<div class="a" style="left:31.66px;top:83.13px;font-size:10.8px;line-height:12.06px;font-weight:400;color:#323130;transform:scaleX(1.0863);">Home</div>
<div class="a" style="left:31.74px;top:111.03px;font-size:10.8px;line-height:12.06px;font-weight:400;color:#323130;">Last</div>
<div class="a" style="left:31.72px;top:138.93px;font-size:10.8px;line-height:12.06px;font-weight:400;color:#323130;transform:scaleX(1.0194);">Enshrined</div>
<div class="a" style="left:32.60px;top:200.73px;font-size:10.8px;line-height:12.06px;font-weight:400;color:#323130;transform:scaleX(1.0523);">All monitor panels</div>
<div class="a" style="left:31.72px;top:273.73px;font-size:10.8px;line-height:12.06px;font-weight:400;color:#323130;transform:scaleX(1.0128);">Enquiries</div>
<div class="a" style="left:32.60px;top:301.93px;font-size:10.8px;line-height:12.06px;font-weight:400;color:#323130;transform:scaleX(1.0697);">Application</div>
<div class="a" style="left:31.74px;top:329.83px;font-size:10.8px;line-height:12.06px;font-weight:400;color:#323130;transform:scaleX(0.9937);">Purchase</div>
<div class="a" style="left:32.09px;top:357.83px;font-size:10.8px;line-height:12.06px;font-weight:400;color:#323130;transform:scaleX(0.9489);">Sales</div>
<div class="a" style="left:31.59px;top:385.73px;font-size:10.8px;line-height:12.06px;font-weight:400;color:#323130;transform:scaleX(1.0343);">Invoice for payme...</div>
<div class="a" style="left:32.03px;top:460.43px;font-size:10.8px;line-height:12.06px;font-weight:400;color:#323130;transform:scaleX(1.0592);">Organization</div>
<div class="a" style="left:32.05px;top:488.13px;font-size:10.8px;line-height:12.06px;font-weight:400;color:#323130;transform:scaleX(1.0219);">Contacts</div>
<div class="a" style="left:32.04px;top:515.83px;font-size:10.8px;line-height:12.06px;font-weight:400;color:#323130;transform:scaleX(1.0386);">Contracts</div>
<div class="a" style="left:31.65px;top:589.83px;font-size:10.8px;line-height:12.06px;font-weight:400;color:#323130;transform:scaleX(1.1024);">Meeting</div>
<div class="a" style="left:7.79px;top:169.93px;font-size:10.8px;line-height:12.06px;font-weight:400;color:#201f1e;transform:scaleX(1.0507);-webkit-text-stroke:0.25px #201f1e;">Dashboard</div>
<div class="a" style="left:8.19px;top:243.33px;font-size:10.8px;line-height:12.06px;font-weight:400;color:#201f1e;transform:scaleX(0.9374);-webkit-text-stroke:0.25px #201f1e;">Sales</div>
<div class="a" style="left:8.14px;top:428.93px;font-size:10.8px;line-height:12.06px;font-weight:400;color:#201f1e;transform:scaleX(1.0350);-webkit-text-stroke:0.25px #201f1e;">Clients</div>
<div class="a" style="left:8.50px;top:558.43px;font-size:10.8px;line-height:12.06px;font-weight:400;color:#201f1e;transform:scaleX(0.9370);-webkit-text-stroke:0.25px #201f1e;">Tasks</div>
</body></html>
